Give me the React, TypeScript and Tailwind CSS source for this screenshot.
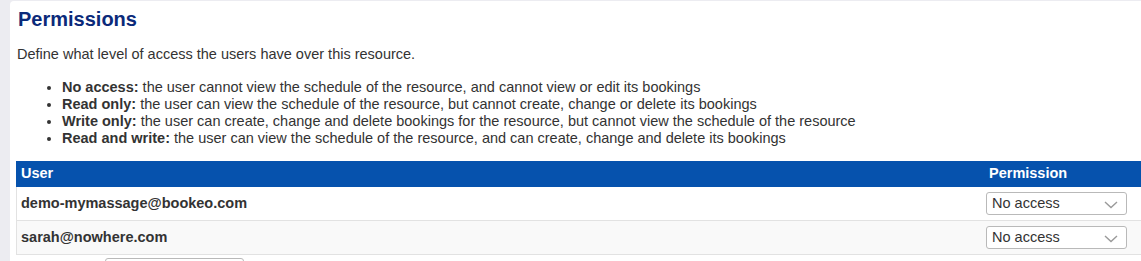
const USERS = ["demo-mymassage@bookeo.com", "sarah@nowhere.com"];

const LEVELS = [
  { label: "No access:", text: "the user cannot view the schedule of the resource, and cannot view or edit its bookings" },
  { label: "Read only:", text: "the user can view the schedule of the resource, but cannot create, change or delete its bookings" },
  { label: "Write only:", text: "the user can create, change and delete bookings for the resource, but cannot view the schedule of the resource" },
  { label: "Read and write:", text: "the user can view the schedule of the resource, and can create, change and delete its bookings" },
];

function PermissionSelect() {
  return (
    <div className="relative w-[141px] h-[23px] border border-[#b9b9b9] rounded-[3px] bg-white flex items-center pl-[5px] text-[14.5px] text-[#333]">
      No access
      <svg width="14" height="8" viewBox="0 0 14 8" className="absolute right-[8px] top-[8px]" fill="none">
        <path d="M1 1l6 5.5L13 1" stroke="#9a9a9a" strokeWidth="1.4" />
      </svg>
    </div>
  );
}

export default function App() {
  return (
    <div className="w-[1141px] h-[261px] overflow-hidden bg-[#ececf1] font-['Liberation_Sans',Arial,sans-serif]">
      <div className="ml-[10px] mt-[1px] h-[300px] bg-white rounded-tl-[4px] pl-[6px] pt-[6px]">
        <h2 className="text-[20px] font-bold text-[#0b2a7a] leading-[24px] pl-[2px]">Permissions</h2>
        <p className="mt-[15px] text-[14.5px] text-[#333] leading-[16px] pl-[1px]">
          Define what level of access the users have over this resource.
        </p>
        <ul className="mt-[17px] pl-[46px] text-[14.5px] text-[#333] leading-[17px] list-disc">
          {LEVELS.map((l) => (
            <li key={l.label}>
              <b>{l.label}</b> {l.text}
            </li>
          ))}
        </ul>
        <div className="mt-[14px] w-[1140px] text-[14.5px]">
          <div className="flex h-[26px] items-center bg-[#0652ad] text-white font-bold">
            <div className="flex-1 pl-[5px]">User</div>
            <div className="w-[173px] pl-[6px]">Permission</div>
          </div>
          {USERS.map((u, i) => (
            <div
              key={u}
              className={`flex h-[34px] items-center border-b border-l border-[#e2e2e2] ${i % 2 === 1 ? "bg-[#f9f9f9]" : "bg-white"}`}
            >
              <div className="flex-1 pl-[4px] font-bold text-[#333]">{u}</div>
              <div className="w-[173px] pl-[3px]">
                <PermissionSelect />
              </div>
            </div>
          ))}
          <div className="ml-[89px] mt-[3px] w-[139px] h-[20px] border border-[#b9b9b9] rounded-[3px] bg-white" />
        </div>
      </div>
    </div>
  );
}
